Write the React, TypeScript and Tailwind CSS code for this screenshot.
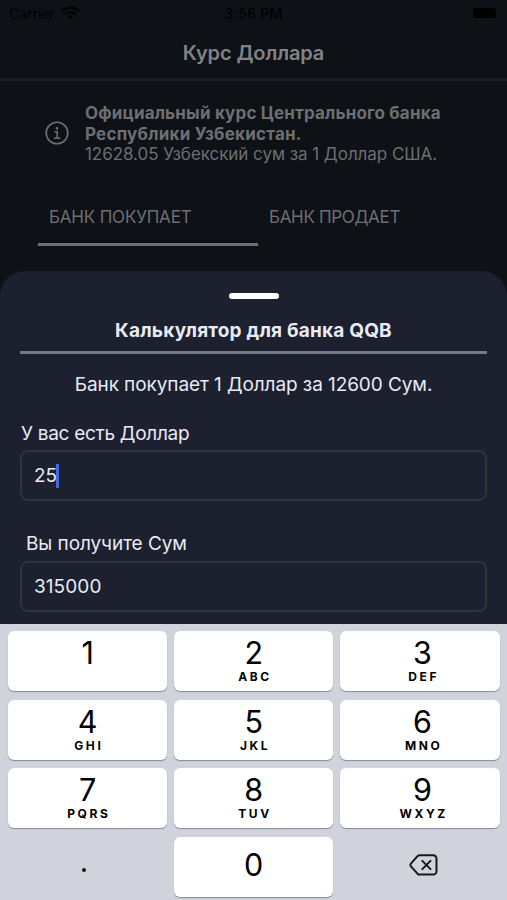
const keys = [
  { digit: "1", letters: "" },
  { digit: "2", letters: "ABC" },
  { digit: "3", letters: "DEF" },
  { digit: "4", letters: "GHI" },
  { digit: "5", letters: "JKL" },
  { digit: "6", letters: "MNO" },
  { digit: "7", letters: "PQRS" },
  { digit: "8", letters: "TUV" },
  { digit: "9", letters: "WXYZ" },
];

function WifiIcon() {
  return (
    <svg className="ml-1.5 h-[14px] w-[19px]" viewBox="0 0 19 14" fill="none" stroke="#010203" strokeWidth="2.6">
      <path d="M1.2 5.1a12 12 0 0 1 16.6 0" />
      <path d="M4.2 8.4a7.7 7.7 0 0 1 10.6 0" />
      <path d="M9.5 13.6 6.6 10.7a4.2 4.2 0 0 1 5.8 0Z" fill="#010203" stroke="none" />
    </svg>
  );
}

function InfoIcon() {
  return (
    <svg className="mb-[2px] h-6 w-6 shrink-0" viewBox="0 0 24 24" fill="none" stroke="#6d6f73" strokeWidth="1.6">
      <circle cx="12" cy="12" r="10.8" />
      <circle cx="11.9" cy="7.4" r="1.3" fill="#6d6f73" stroke="none" />
      <path d="M9.2 10.7h3v6.3M8.8 17.2h6.6" />
    </svg>
  );
}

function DeleteIcon() {
  return (
    <svg className="h-[22px] w-[29px]" viewBox="0 0 29 22" fill="none" stroke="#16181c" strokeWidth="2" strokeLinecap="round" strokeLinejoin="round">
      <path d="M10.6 1.3h13.6a3.3 3.3 0 0 1 3.3 3.3v12.7a3.3 3.3 0 0 1-3.3 3.3H10.6a3 3 0 0 1-2.1-.9L1.9 12.3a1.8 1.8 0 0 1 0-2.6l6.6-7.5a3 3 0 0 1 2.1-.9Z" />
      <path d="m13.3 6.9 8.2 8.2M21.5 6.9l-8.2 8.2" />
    </svg>
  );
}

function Key({ digit, letters }: { digit: string; letters: string }) {
  return (
    <button className="flex h-[60px] flex-col items-center rounded-[6px] bg-white text-black shadow-[0_1px_1px_#888a8e] nth-[3n]:pl-[5px]">
      <span className="mt-[5px] text-[30.5px] leading-[34px] font-[375]">{digit}</span>
      <span className="pl-[2.5px] text-[12px] leading-[13px] font-bold tracking-[2.6px]">{letters}</span>
    </button>
  );
}

export default function App() {
  return (
    <div className="flex h-[900px] w-[507px] flex-col overflow-hidden bg-[#0e1116] font-['Inter','Liberation_Sans',sans-serif] whitespace-nowrap">
      <div className="grid h-[26px] shrink-0 grid-cols-3 items-center px-[9px] text-[14px] text-[#010203]">
        <div className="flex items-center">
          Carrier
          <WifiIcon />
        </div>
        <div className="text-center font-medium tracking-[0.3px]">3:56 PM</div>
        <div className="mr-[2px] h-[10px] w-[23px] justify-self-end rounded-[3px] bg-black" />
      </div>
      <header className="flex h-[55px] shrink-0 items-center justify-center border-b-[3px] border-[#1b1e23] pt-px text-[20px] font-semibold tracking-[-0.12px] text-[#818286]">
        Курс Доллара
      </header>

      <section className="flex h-[106px] shrink-0 items-center pl-[45px] text-[17px] leading-[20.5px] text-[#6d6f73]">
        <InfoIcon />
        <div className="ml-4">
          <p className="font-bold tracking-[0.17px]">Официальный курс Центрального банка</p>
          <p className="font-bold tracking-[0.24px]">Республики Узбекистан.</p>
          <p className="tracking-[-0.05px]">12628.05 Узбекский сум за 1 Доллар США.</p>
        </div>
      </section>
      <nav className="mx-[38px] flex h-[59px] shrink-0 text-[17px] leading-[60px] text-[#6d6f73]">
        <div className="w-[220px] border-b-[3px] border-[#6f7074] pl-[11px] tracking-[-0.18px]">БАНК ПОКУПАЕТ</div>
        <div className="pl-[11px] tracking-[-0.32px]">БАНК ПРОДАЕТ</div>
      </nav>

      <main className="mt-[25px] flex h-[353px] shrink-0 flex-col rounded-t-[25px] bg-[#1d202e] px-[20px] text-[19px] text-[#e8eaf4]">
        <div className="mt-[22px] h-[6px] w-[50px] shrink-0 self-center rounded-full bg-white" />
        <h1 className="mt-[15px] h-[40px] shrink-0 border-b-[3px] border-[#777b88] text-center text-[19px] leading-[34px] font-bold tracking-[0.2px]">
          Калькулятор для банка QQB
        </h1>
        <p className="mt-[19px] text-center leading-[24px] tracking-[-0.08px]">Банк покупает 1 Доллар за 12600 Сум.</p>
        <label className="mt-[25px] ml-px leading-[24px] tracking-[-0.28px]">У вас есть Доллар</label>
        <div className="mt-[4px] flex h-[51px] shrink-0 items-center rounded-[8px] border-2 border-[#30343a] pt-px pl-[12px]">
          25
          <span className="-ml-px h-[24px] w-[2.5px] bg-[#4668df]" />
        </div>
        <label className="mt-[31px] ml-[6px] leading-[24px] tracking-[-0.07px]">Вы получите Сум</label>
        <div className="mt-[5px] flex h-[51px] shrink-0 items-center rounded-[8px] border-2 border-[#30343a] pt-px pl-[12px] tracking-[0.08px]">315000</div>
      </main>

      <div className="grid grow grid-cols-3 content-start gap-x-[7px] gap-y-[8.6px] bg-[#d0d3dc] pt-[7px] pr-[7.5px] pl-[8px]">
        {keys.map((key) => (
          <Key key={key.digit} digit={key.digit} letters={key.letters} />
        ))}
        <button className="flex h-[60px] items-center justify-center pr-[8px]">
          <span className="mt-[6px] h-1 w-1 rounded-full bg-[#16181c]" />
        </button>
        <button className="flex h-[60px] items-center justify-center rounded-[6px] bg-white pb-[3px] text-[30.5px] leading-[34px] font-[375] text-black shadow-[0_1px_1px_#888a8e]">0</button>
        <button className="flex h-[60px] items-center justify-center pb-[3px] pl-[7px]">
          <DeleteIcon />
        </button>
      </div>
    </div>
  );
}
